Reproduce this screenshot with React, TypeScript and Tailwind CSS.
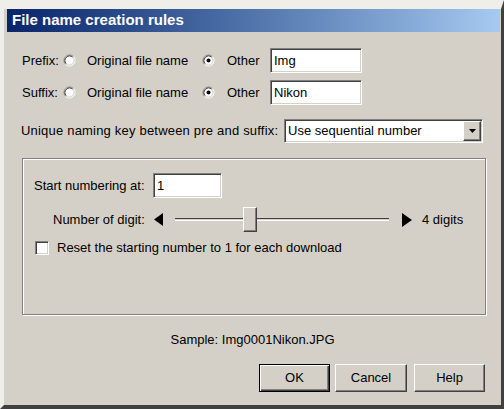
const sunken =
  "border border-t-[#808080] border-l-[#808080] border-b-white border-r-white shadow-[inset_1px_1px_0_#404040,inset_-1px_-1px_0_#d4d0c8] bg-white";
const raised =
  "border border-t-white border-l-white border-b-[#404040] border-r-[#404040] shadow-[inset_-1px_-1px_0_#808080] bg-[#d4d0c8]";

const Radio = ({ checked }: { checked?: boolean }) => (
  <svg width="13" height="13" viewBox="0 0 13 13" className="shrink-0">
    <circle cx="6.5" cy="6.5" r="5" fill="white" />
    <path d="M2.61 10.39 A5.5 5.5 0 0 1 10.39 2.61" fill="none" stroke="#808080" />
    <path d="M10.39 2.61 A5.5 5.5 0 0 1 2.61 10.39" fill="none" stroke="#ffffff" />
    <path d="M3.32 9.68 A4.5 4.5 0 0 1 9.68 3.32" fill="none" stroke="#404040" />
    <path d="M9.68 3.32 A4.5 4.5 0 0 1 3.32 9.68" fill="none" stroke="#d4d0c8" />
    {checked && <circle cx="6.5" cy="6.5" r="2" fill="black" />}
  </svg>
);

const NameRow = ({ label, value, className }: { label: string; value: string; className: string }) => (
  <div className={`flex h-[25px] items-center pl-[18px] ${className}`}>
    <span className="w-[41px]">{label}</span>
    <span className="w-[24px]">
      <Radio />
    </span>
    <span className="w-[115px] whitespace-nowrap">Original file name</span>
    <span className="w-[25px]">
      <Radio checked />
    </span>
    <span className="w-[43px]">Other</span>
    <div className={`flex h-[25px] w-[92px] items-center pl-[3px] ${sunken}`}>{value}</div>
  </div>
);

export default function App() {
  return (
    <div className="flex h-[409px] w-[504px] flex-col border-t-[9px] border-r-[3px] border-b-[4px] border-l-[4px] border-t-[#efeee9] border-r-[#404040] border-b-[#404040] border-l-[#efeee9] bg-[#d4d0c8] font-['Liberation_Sans',Arial,sans-serif] text-[13px] text-black">
      <div className="ml-[3px] mr-[1px] flex h-[23px] items-center bg-gradient-to-r from-[#0a246a] to-[#a6caf0] pl-[5px] text-[15px] font-bold text-white">
        File name creation rules
      </div>

      <NameRow label="Prefix:" value="Img" className="mt-[16px]" />
      <NameRow label="Suffix:" value="Nikon" className="mt-[7px]" />

      <div className="mt-[14px] flex h-[24px] items-center pl-[17px]">
        <span className="w-[263px] whitespace-nowrap tracking-[0.2px]">Unique naming key between pre and suffix:</span>
        <div className={`flex h-[24px] w-[199px] items-center justify-between pl-[3px] ${sunken}`}>
          <span>Use sequential number</span>
          <div className={`mr-[1px] flex h-[20px] w-[18px] items-center justify-center ${raised}`}>
            <svg width="7" height="4" viewBox="0 0 7 4">
              <polygon points="0,0 7,0 3.5,4" fill="black" />
            </svg>
          </div>
        </div>
      </div>

      <div className="mt-[15px] ml-[18px] flex h-[157px] w-[464px] flex-col border border-[#808080] shadow-[inset_1px_1px_0_white,1px_1px_0_white]">
        <div className="mt-[14px] flex h-[25px] items-center pl-[11px]">
          <span className="w-[119px] whitespace-nowrap">Start numbering at:</span>
          <div className={`flex h-[25px] w-[69px] items-center pl-[3px] ${sunken}`}>1</div>
        </div>

        <div className="mt-[9px] flex h-[25px] items-center pl-[30px]">
          <span className="w-[101px] whitespace-nowrap">Number of digit:</span>
          <svg width="9" height="13" viewBox="0 0 9 13">
            <polygon points="9,0 0,6.5 9,13" fill="black" />
          </svg>
          <div className="relative ml-[12px] flex h-[25px] w-[214px] items-center">
            <div className="h-[3px] w-full border-t border-b border-t-[#404040] border-b-white" />
            <div className={`absolute top-0 left-[68px] h-[25px] w-[14px] ${raised}`} />
          </div>
          <svg width="10" height="14" viewBox="0 0 10 14" className="ml-[13px]">
            <polygon points="0,0 10,7 0,14" fill="black" />
          </svg>
          <span className="ml-[10px]">4 digits</span>
        </div>

        <div className="mt-[8px] flex h-[15px] items-center pl-[12px]">
          <div className={`h-[14px] w-[14px] ${sunken}`} />
          <span className="ml-[8px] whitespace-nowrap">Reset the starting number to 1 for each download</span>
        </div>
      </div>

      <div className="mt-[17px] h-[16px] text-center leading-[16px]">Sample: Img0001Nikon.JPG</div>

      <div className="mt-[16px] flex justify-end pr-[16px]">
        <button className="flex h-[28px] w-[71px] items-center justify-center border border-black bg-[#d4d0c8] shadow-[inset_1px_1px_0_white,inset_-1px_-1px_0_#404040,inset_-2px_-2px_0_#808080]">
          OK
        </button>
        <button className={`ml-[5px] flex h-[28px] w-[72px] items-center justify-center ${raised}`}>Cancel</button>
        <button className={`ml-[7px] flex h-[28px] w-[71px] items-center justify-center ${raised}`}>Help</button>
      </div>
    </div>
  );
}
